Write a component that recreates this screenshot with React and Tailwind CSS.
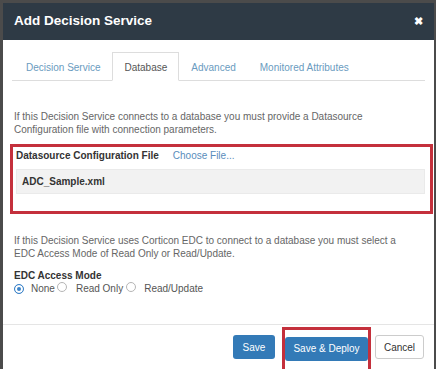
import { useState } from "react";

const tabs = ["Decision Service", "Database", "Advanced", "Monitored Attributes"];

function Radio({ checked }) {
	return (
		<span
			className={
				"inline-block h-[10px] w-[10px] shrink-0 rounded-full border " +
				(checked ? "border-[#3b83c9] bg-[#3b83c9] shadow-[inset_0_0_0_2px_#fff]" : "border-[#b5b5b5] bg-white")
			}
		/>
	);
}

export default function App() {
	const [mode] = useState("None");
	return (
		<div className="h-[369px] w-[436px] overflow-hidden bg-[#4b4b4b] pl-[3px] pr-[2px] pt-[3px] font-['Liberation_Sans',Arial,sans-serif]">
			<div className="flex h-full flex-col bg-white">
				<div className="flex h-[37px] items-center justify-between bg-[#2e3a45] pl-[11px] pr-[11px]">
					<h2 className="text-[13.5px] font-bold text-white">Add Decision Service</h2>
					<span className="text-[11px] font-bold leading-none text-white">&#x2716;</span>
				</div>

				<div className="px-[9px] pt-[12px]">
					<div className="flex border-b border-[#ddd] pl-[2px]">
						{tabs.map((t) => (
							<div
								key={t}
								className={
									"-mb-px h-[29px] px-[11px] text-[10px] leading-[29px] " +
									(t === "Database"
										? "border border-[#ddd] border-b-white bg-white text-[#555]"
										: "border border-transparent text-[#6a9bc0]")
								}
							>
								{t}
							</div>
						))}
					</div>

					<p className="mt-[29px] max-w-[392px] px-[2px] text-[10px] leading-[13px] text-[#666]">
						If this Decision Service connects to a database you must provide a Datasource Configuration file with connection parameters.
					</p>

					<div className="-ml-[2px] mr-[-8px] mt-[8px] h-[70px] border-[3px] border-[#c4303c] pl-[3px] pr-[5px] pt-[2px]">
						<div className="flex items-center text-[10px] leading-[14px]">
							<span className="font-bold text-[#333]">Datasource Configuration File</span>
							<span className="ml-[14px] text-[#5a8dbc]">Choose File...</span>
						</div>
						<div className="mt-[6px] h-[25px] border border-[#eaeaea] bg-[#f2f2f2] px-[5px] text-[10px] font-bold leading-[23px] text-[#333]">
							ADC_Sample.xml
						</div>
					</div>

					<p className="mt-[20px] max-w-[392px] px-[2px] text-[10px] leading-[13px] text-[#666]">
						If this Decision Service uses Corticon EDC to connect to a database you must select a EDC Access Mode of Read Only or Read/Update.
					</p>

					<div className="mt-[9px] px-[2px] text-[10px] font-bold leading-[13px] text-[#333]">EDC Access Mode</div>
					<div className="flex items-center pl-[2px] text-[10px] leading-[13px] text-[#555]">
						<Radio checked={mode === "None"} />
						<span className="ml-[7px]">None</span>
						<span className="ml-[2px]">
							<Radio checked={mode === "Read Only"} />
						</span>
						<span className="ml-[9px]">Read Only</span>
						<span className="ml-[3px]">
							<Radio checked={mode === "Read/Update"} />
						</span>
						<span className="ml-[8px]">Read/Update</span>
					</div>
				</div>

				<div className="mt-auto h-[45px] border-t border-[#e5e5e5] pr-[10px]">
					<div className="flex items-start justify-end pt-[10px]">
						<button className="h-[24px] w-[42px] rounded-[3px] bg-[#337ab7] text-[10px] text-white">Save</button>
						<div className="-mt-[8px] ml-[7px] h-[45px] border-[3px] border-[#c4303c] pt-[5px]">
							<button className="h-[24px] w-[83px] rounded-[3px] bg-[#337ab7] text-[10px] text-white">Save &amp; Deploy</button>
						</div>
						<button className="ml-[4px] h-[24px] w-[49px] rounded-[3px] border border-[#ccc] bg-white text-[10px] text-[#333]">Cancel</button>
					</div>
				</div>
			</div>
		</div>
	);
}
